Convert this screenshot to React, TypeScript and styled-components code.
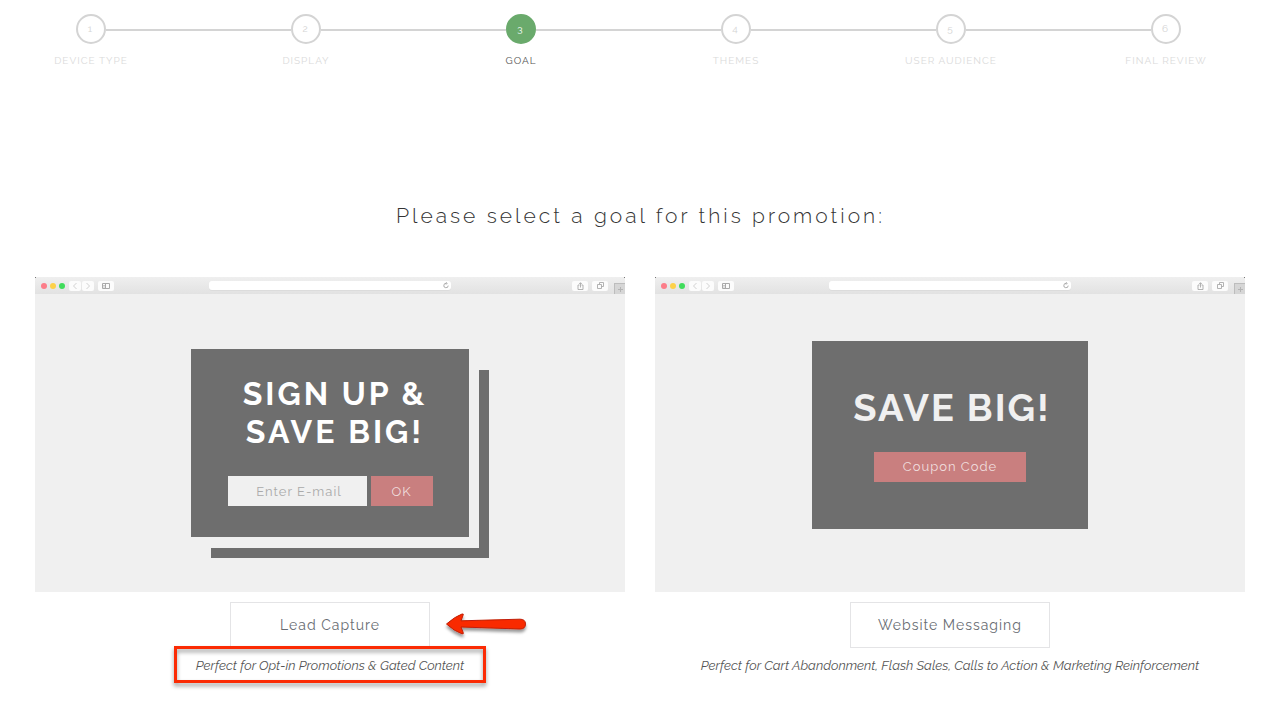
import React, { useState } from "react";
import styled, { createGlobalStyle, css } from "styled-components";

const GlobalStyle = createGlobalStyle`
  *, *::before, *::after { box-sizing: border-box; }
  body {
    margin: 0;
    background: #fff;
    color: #555;
    font-family: Raleway, Lato, "Open Sans", sans-serif;
  }
  button, input { font-family: inherit; }
`;

const Steps = styled.ol`
  display: flex;
  margin: 0;
  padding: 14px 100px 0 76px;
  list-style: none;
`;

const Step = styled.li`
  display: flex;
  flex: 1;

  &:last-child { flex: none; }
`;

const Marker = styled.div`
  display: flex;
  flex-direction: column;
  align-items: center;
  gap: 10px;
  width: 30px;
`;

const Circle = styled.span<{ $active: boolean }>`
  display: flex;
  flex: none;
  align-items: center;
  justify-content: center;
  width: 30px;
  height: 30px;
  padding: 0 2px 2px 0;
  border: 2px solid ${(p) => (p.$active ? "#6aaa6c" : "#d4d4d4")};
  border-radius: 50%;
  background: ${(p) => (p.$active ? "#6aaa6c" : "#fff")};
  color: ${(p) => (p.$active ? "#fff" : "#d4d4d4")};
  font-size: 10px;
`;

const StepLabel = styled.span<{ $active: boolean }>`
  color: ${(p) => (p.$active ? "#555" : "#dadada")};
  font-size: 10px;
  line-height: 14px;
  letter-spacing: 1px;
  text-transform: uppercase;
  white-space: nowrap;
`;

const Connector = styled.span`
  flex: 1;
  height: 2px;
  margin-top: 15px;
  background: #d4d4d4;
`;

const Heading = styled.h1`
  margin: 132px 0 0;
  color: #333;
  font-size: 21px;
  font-weight: 300;
  line-height: 32px;
  letter-spacing: 3px;
  text-align: center;
`;

const Goals = styled.main`
  display: grid;
  grid-template-columns: 1fr 1fr;
  gap: 30px;
  padding: 45px 36px 24px 35px;
`;

const Goal = styled.section`
  display: flex;
  flex-direction: column;
  align-items: center;
  min-width: 0;
`;

const Browser = styled.div`
  display: flex;
  flex-direction: column;
  width: 100%;
  min-height: 315px;
  background: #f0f0f0;
`;

const Toolbar = styled.div`
  display: flex;
  align-items: center;
  height: 17px;
  background:
    linear-gradient(#777, #777) left top / 1px 1px no-repeat,
    linear-gradient(#777, #777) right top / 1px 1px no-repeat,
    linear-gradient(#efefef, #e2e2e2);
`;

const Lights = styled.div`
  display: flex;
  gap: 3px;
`;

const Light = styled.span<{ $color: string }>`
  width: 6px;
  height: 6px;
  border-radius: 50%;
  background: ${(p) => p.$color};
`;

const Tool = styled.span<{ $width: number }>`
  display: flex;
  align-items: center;
  justify-content: center;
  width: ${(p) => p.$width}px;
  height: 10px;
  border-radius: 2px;
  background: #fcfcfc;
  color: #aaa;
`;

const ToolGroup = styled.div<{ $gap: number }>`
  display: flex;
  align-items: center;
  gap: ${(p) => p.$gap}px;
`;

const LeftTools = styled.div`
  display: flex;
  flex: 1;
  align-items: center;
  gap: 4px;
  padding-left: 6px;
`;

const RightTools = styled(LeftTools)`
  align-self: stretch;
  justify-content: flex-end;
  gap: 6px;
`;

const AddressBar = styled.div`
  display: flex;
  align-items: center;
  justify-content: flex-end;
  width: 242px;
  height: 9px;
  padding-right: 2px;
  border-radius: 3px;
  background: #fff;
  box-shadow: 0 1px 0 #dcdcdc;
  color: #999;
`;

const NewTab = styled.span`
  display: flex;
  align-items: center;
  justify-content: center;
  align-self: flex-end;
  width: 11px;
  height: 11px;
  border: solid #bdbdbd;
  border-width: 1px 0 0 1px;
  background: #d6d6d6;
  color: #b4b4b4;
`;

const Viewport = styled.div<{ $raised: boolean }>`
  display: flex;
  flex: 1;
  align-items: center;
  justify-content: center;
  padding-bottom: ${(p) => (p.$raised ? 16 : 0)}px;
`;

const Popup = styled.div<{ $layered: boolean }>`
  display: flex;
  flex-direction: column;
  align-items: center;
  justify-content: center;
  gap: 25px;
  width: ${(p) => (p.$layered ? 278 : 276)}px;
  height: 188px;
  background: #6e6e6e;
  ${(p) =>
    p.$layered &&
    css`
      padding-bottom: 5px;
      box-shadow: 10px 11px 0 #f0f0f0, 20px 21px 0 #6e6e6e;
    `}
`;

const PopupTitle = styled.h2<{ $large: boolean }>`
  margin: 0;
  padding-left: ${(p) => (p.$large ? 4 : 10)}px;
  color: ${(p) => (p.$large ? "#f0f0f0" : "#fff")};
  font-size: ${(p) => (p.$large ? 38 : 32)}px;
  font-weight: 700;
  line-height: 38px;
  letter-spacing: ${(p) => (p.$large ? 2 : 3)}px;
  text-align: center;
  white-space: pre-line;
`;

const SignupForm = styled.form`
  display: flex;
  gap: 4px;
`;

const EmailInput = styled.input`
  width: 139px;
  height: 30px;
  padding: 0 0 0 4px;
  border: 0;
  border-radius: 0;
  background: #f0f0f0;
  color: #777;
  font-size: 13px;
  letter-spacing: 1px;
  text-align: center;

  &::placeholder { color: #aaa; opacity: 1; }
`;

const PopupButton = styled.button<{ $width: number }>`
  width: ${(p) => p.$width}px;
  height: 30px;
  padding: 0;
  border: 0;
  background: #c97f7f;
  color: #f0dede;
  font-size: 13px;
  letter-spacing: 1px;
`;

const GoalButton = styled.button`
  width: 200px;
  height: 46px;
  margin-top: 10px;
  padding: 0;
  border: 1px solid #e4e4e6;
  background: #fff;
  color: #686c72;
  font-size: 14px;
  letter-spacing: 1px;
  cursor: pointer;
`;

const ButtonRow = styled.div`
  position: relative;
`;

const Arrow = styled.svg`
  position: absolute;
  top: 20px;
  left: 212px;
  width: 88px;
  height: 32px;
`;

const Caption = styled.p<{ $outlined: boolean }>`
  position: relative;
  margin: 8px 0 0;
  color: #555;
  font-size: 13px;
  font-style: italic;
  line-height: 20px;
  text-align: center;

  ${(p) =>
    p.$outlined &&
    css`
      &::after {
        content: "";
        position: absolute;
        inset: -10px -22px -7px;
        border: 3px solid #fb2b04;
        filter: drop-shadow(0 3px 2px rgba(0, 0, 0, 0.4));
      }
    `}
`;

const BrowserToolbar = () => (
  <Toolbar aria-hidden="true">
    <LeftTools>
      <Lights>
        <Light $color="#fc7d89" />
        <Light $color="#fdd14a" />
        <Light $color="#3fdc5b" />
      </Lights>
      <ToolGroup $gap={1}>
        <Tool $width={12}>
          <svg width="6" height="8" viewBox="0 0 6 8" fill="none" stroke="#d2d2d2">
            <path d="M4.500 1L1.500 4L4.500 7" />
          </svg>
        </Tool>
        <Tool $width={12}>
          <svg width="6" height="8" viewBox="0 0 6 8" fill="none" stroke="#d2d2d2">
            <path d="M1.500 1L4.500 4L1.500 7" />
          </svg>
        </Tool>
      </ToolGroup>
      <Tool $width={16}>
        <svg width="8" height="6" viewBox="0 0 8 6" fill="none" stroke="currentColor">
          <path d="M.5 .5H7.500V5.500H.5ZM3.500 .5V5.500" />
          <path d="M1 2.500H3M1 4H3" strokeWidth=".6" />
        </svg>
      </Tool>
    </LeftTools>
    <AddressBar>
      <svg width="6" height="7" viewBox="0 0 6 7" fill="none" stroke="currentColor" strokeWidth=".8">
        <path d="M3.500 1.400A2.200 2.200 0 1 0 5.200 3.600M2.800 .2L4.200 1.400L3 2.600" />
      </svg>
    </AddressBar>
    <RightTools>
      <ToolGroup $gap={4}>
        <Tool $width={16}>
          <svg width="7" height="8" viewBox="0 0 7 8" fill="none" stroke="currentColor" strokeWidth=".9">
            <path d="M2.500 3H1V7.500H6V3H4.500M3.500 5.500V.8M2.200 2L3.500 .7L4.800 2" />
          </svg>
        </Tool>
        <Tool $width={16}>
          <svg width="7" height="7" viewBox="0 0 7 7" fill="none" stroke="currentColor" strokeWidth=".9">
            <path d="M.5 2.500H4.500V6.500H.5ZM2.500 2.500V.5H6.500V4.500H4.500" />
          </svg>
        </Tool>
      </ToolGroup>
      <NewTab>
        <svg width="5" height="5" viewBox="0 0 5 5" stroke="currentColor">
          <path d="M0 2.500H5M2.500 0V5" />
        </svg>
      </NewTab>
    </RightTools>
  </Toolbar>
);

const PointerArrow = () => (
  <Arrow viewBox="0 0 88 32" aria-hidden="true">
    <defs>
      <filter id="arrow-shadow" x="-10%" y="-20%" width="120%" height="160%">
        <feDropShadow dx="0" dy="3" stdDeviation="1.500" floodOpacity=".4" />
      </filter>
    </defs>
    <path
      d="M4.500 12Q13 4.500 20 2Q22 1.500 21 3.500L19 8.800L78 7.200Q83.500 7.200 83.500 12Q83.500 17 78 17L19 15L21 20Q22 22.500 20 21.800Q12 19 4.500 12Z"
      fill="#f92a04"
      stroke="#c01f08"
      strokeLinejoin="round"
      filter="url(#arrow-shadow)"
    />
  </Arrow>
);

const steps = ["Device Type", "Display", "Goal", "Themes", "User Audience", "Final Review"];

export default function App() {
  const [email, setEmail] = useState("");
  const current = 2;

  return (
    <>
      <GlobalStyle />
      <Steps>
        {steps.map((label, i) => (
          <Step key={label} aria-current={i === current ? "step" : undefined}>
            <Marker>
              <Circle $active={i === current}>{i + 1}</Circle>
              <StepLabel $active={i === current}>{label}</StepLabel>
            </Marker>
            {i < steps.length - 1 && <Connector />}
          </Step>
        ))}
      </Steps>

      <Heading>Please select a goal for this promotion:</Heading>

      <Goals>
        <Goal>
          <Browser>
            <BrowserToolbar />
            <Viewport $raised={false}>
              <Popup $layered>
                <PopupTitle $large={false}>{"SIGN UP &\nSAVE BIG!"}</PopupTitle>
                <SignupForm onSubmit={(e) => e.preventDefault()}>
                  <EmailInput
                    type="email"
                    aria-label="E-mail"
                    placeholder="Enter E-mail"
                    value={email}
                    onChange={(e) => setEmail(e.target.value)}
                  />
                  <PopupButton $width={62}>OK</PopupButton>
                </SignupForm>
              </Popup>
            </Viewport>
          </Browser>
          <ButtonRow>
            <GoalButton type="button">Lead Capture</GoalButton>
            <PointerArrow />
          </ButtonRow>
          <Caption $outlined>Perfect for Opt-in Promotions &amp; Gated Content</Caption>
        </Goal>

        <Goal>
          <Browser>
            <BrowserToolbar />
            <Viewport $raised>
              <Popup $layered={false}>
                <PopupTitle $large>SAVE BIG!</PopupTitle>
                <PopupButton type="button" $width={152}>Coupon Code</PopupButton>
              </Popup>
            </Viewport>
          </Browser>
          <ButtonRow>
            <GoalButton type="button">Website Messaging</GoalButton>
          </ButtonRow>
          <Caption $outlined={false}>
            Perfect for Cart Abandonment, Flash Sales, Calls to Action &amp; Marketing Reinforcement
          </Caption>
        </Goal>
      </Goals>
    </>
  );
}
